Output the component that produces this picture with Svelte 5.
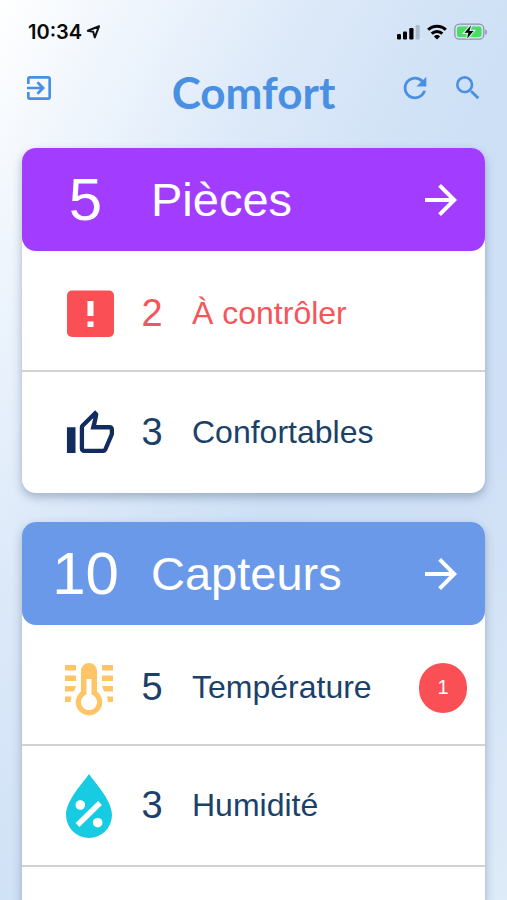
<script>
	const cards = [
		{
			title: 'Pièces',
			count: 5,
			theme: 'violet',
			rows: [
				{ icon: 'alert', count: 2, label: 'À contrôler', danger: true },
				{ icon: 'thumb', count: 3, label: 'Confortables' }
			]
		},
		{
			title: 'Capteurs',
			count: 10,
			theme: 'blue',
			rows: [
				{ icon: 'thermo', count: 5, label: 'Température', badge: 1 },
				{ icon: 'drop', count: 3, label: 'Humidité' },
				{}
			]
		}
	];
</script>

<div class="screen">
	<div class="status">
		<div class="status-left">
			<span class="time">10:34</span>
			<svg width="15" height="14" viewBox="0 0 15 14">
				<path d="M13 1.3 1.8 5.8l5.4 1 1.6 5.6z" fill="none" stroke="#111" stroke-width="2" stroke-linejoin="round" />
			</svg>
		</div>
		<div class="status-right">
			<svg width="23" height="16" viewBox="0 0 23 16">
				<rect x="0" y="10" width="4" height="5.5" rx="1.2" />
				<rect x="6" y="7.5" width="4" height="8" rx="1.2" />
				<rect x="12.3" y="4" width="4.2" height="11.5" rx="1.2" />
				<rect x="18.7" y="1" width="4" height="14.5" rx="1.2" fill="#a9bbd0" />
			</svg>
			<svg width="20" height="16" viewBox="0 0 20 16">
				<g fill="none" stroke="#000" stroke-width="3">
					<path d="M1.2 5.8a12.5 12.5 0 0 1 17.6 0" />
					<path d="M4.7 9.7a7.6 7.6 0 0 1 10.6 0" />
				</g>
				<path d="M10 15.5 6.9 12.4a4.4 4.4 0 0 1 6.2 0z" />
			</svg>
			<svg width="34" height="18" viewBox="0 0 34 18">
				<rect x="0.8" y="1.2" width="29" height="15" rx="4.5" fill="none" stroke="#8c96a4" stroke-width="1.3" />
				<rect x="3" y="3.4" width="24.6" height="10.6" rx="2.5" fill="#4cdb64" />
				<path d="M31.3 6.2c2.2.8 2.2 4.800 0 5.6z" fill="#8c96a4" />
				<path d="M17 2.500 10.500 9.800h3.900l-1.300 5.700L19.500 8h-4.200z" stroke="#d6e8f2" stroke-width="2.500" paint-order="stroke" />
			</svg>
		</div>
	</div>

	<header class="toolbar">
		<div class="tools">
			<button aria-label="Se déconnecter">
				<svg width="32" height="32" viewBox="0 0 24 24">
					<path d="M10.09 15.59 11.5 17l5-5-5-5-1.41 1.41L12.67 11H3v2h9.67zM19 3H5c-1.11 0-2 .9-2 2v4h2V5h14v14H5v-4H3v4c0 1.1.89 2 2 2h14c1.1 0 2-.9 2-2V5c0-1.1-.9-2-2-2z" />
				</svg>
			</button>
		</div>
		<h1>Comfort</h1>
		<div class="tools end">
			<button aria-label="Actualiser">
				<svg width="34" height="34" viewBox="0 0 24 24">
					<path d="M17.65 6.35A7.958 7.958 0 0 0 12 4c-4.42 0-7.99 3.58-7.99 8s3.57 8 7.99 8c3.73 0 6.84-2.55 7.73-6h-2.08A5.99 5.99 0 0 1 12 18c-3.31 0-6-2.69-6-6s2.69-6 6-6c1.66 0 3.14.69 4.22 1.78L13 11h7V4z" />
				</svg>
			</button>
			<button aria-label="Rechercher">
				<svg width="32" height="32" viewBox="0 0 24 24">
					<path d="M15.5 14h-.79l-.28-.27A6.471 6.471 0 0 0 16 9.5 6.5 6.5 0 1 0 9.5 16c1.61 0 3.09-.59 4.23-1.57l.27.28v.79l5 4.99L20.49 19zm-6 0C7.01 14 5 11.99 5 9.5S7.01 5 9.5 5 14 7.01 14 9.5 11.99 14 9.5 14z" />
				</svg>
			</button>
		</div>
	</header>

	<main>
		{#each cards as card}
			<section class="card">
				<button class="card-head {card.theme}">
					<span class="total">{card.count}</span>
					<span class="title">{card.title}</span>
					<svg width="48" height="48" viewBox="0 0 24 24">
						<path d="m12 4-1.41 1.41L16.17 11H4v2h12.17l-5.58 5.59L12 20l8-8z" />
					</svg>
				</button>
				{#each card.rows as row}
					<div class="row" class:danger={row.danger}>
						{#if row.icon}
							<svg width="56" height="64" viewBox="0 0 56 64">
								{#if row.icon === 'alert'}
									<rect x="5" y="8.5" width="47" height="46.5" rx="5" fill="#fa5055" />
									<path d="M25.5 19h6v15h-6zM25.5 39.5h6V45h-6z" fill="#fff" />
								{:else if row.icon === 'thumb'}
									<path
										transform="translate(2.8 7) scale(2.14)"
										fill="#122c5f"
										d="M9 21h9c.83 0 1.54-.5 1.84-1.22l3.02-7.05c.09-.23.14-.47.14-.73v-2c0-1.1-.9-2-2-2h-6.31l.95-4.57.03-.32c0-.41-.17-.79-.44-1.06L14.17 1 7.58 7.59C7.22 7.95 7 8.45 7 9v10c0 1.1.9 2 2 2zM9 9l4.34-4.34L12 10h9v2l-3 7H9V9zM1 9h4v12H1z"
									/>
								{:else if row.icon === 'thermo'}
									<g fill="#fec566">
										<path d="M3 9h11v5.5H3zM3 19.5h11V25H3zM3 30h11l-2 5.5H3zM3 40.5h6.5l-1 5.500H3z" />
										<path d="M40 9h11v5.5H40zM40 19.5h11V25H40zM40 30h11v5.5h-9zM45 40.5h6V46h-5z" />
										<path
											fill-rule="evenodd"
											d="M19 15a8 8 0 0 1 16 0v20.5a13.3 13.3 0 1 1-16 0zM24.5 23v15.5a8 8 0 1 0 5 0V23z"
										/>
									</g>
								{:else}
									<path d="M27 0C21 9 4 26 4 41a23 23 0 0 0 46 0C50 26 33 9 27 0z" fill="#17cbe3" />
									<g fill="#fff">
										<circle cx="18.3" cy="31" r="4.8" />
										<circle cx="35.7" cy="48.7" r="4.8" />
									</g>
									<path d="M15.500 51 38 29" stroke="#fff" stroke-width="5.4" />
								{/if}
							</svg>
							<span class="count">{row.count}</span>
							<span class="label">{row.label}</span>
							{#if row.badge}
								<span class="badge">{row.badge}</span>
							{/if}
						{/if}
					</div>
				{/each}
			</section>
		{/each}
	</main>
</div>

<style>
	:global(body) {
		margin: 0;
	}

	.screen {
		display: flex;
		flex-direction: column;
		height: 100vh;
		overflow: hidden;
		font-family: 'Liberation Sans', Arial, sans-serif;
		background: linear-gradient(118deg, #ffffff 0%, #edf4fc 16%, #dce9f9 32%, #cde0f5 54%, #cfe0f6 75%, #deebf8 100%);
	}

	button {
		padding: 0;
		border: 0;
		background: none;
		font: inherit;
		color: inherit;
		cursor: pointer;
	}

	svg {
		display: block;
		flex: none;
	}

	.status {
		display: flex;
		justify-content: space-between;
		align-items: center;
		height: 64px;
		padding: 0 19px 0 28px;
		box-sizing: border-box;
	}

	.status-left,
	.status-right {
		display: flex;
		align-items: center;
	}

	.status-left {
		gap: 4px;
	}

	.status-right {
		gap: 7px;
	}

	.time {
		font: 600 20px/24px Inter, sans-serif;
		color: #0a0a0a;
	}

	.toolbar {
		display: grid;
		grid-template-columns: 1fr auto 1fr;
		align-items: start;
		height: 84px;
		padding: 0 23px;
		box-sizing: border-box;
		flex: none;
		color: #4990e2;
	}

	.tools {
		display: flex;
		align-items: center;
		height: 48px;
	}

	.end {
		justify-content: flex-end;
		gap: 20px;
	}

	.tools svg,
	.card-head svg {
		fill: currentColor;
	}

	h1 {
		margin: 0;
		font: 700 44px/56px Lato, sans-serif;
	}

	main {
		flex: 1;
		min-height: 0;
		padding: 0 22px;
	}

	.card {
		margin-bottom: 29px;
		border-radius: 14px;
		background: #fff;
		box-shadow: 0 4px 10px rgba(70, 90, 120, 0.4);
	}

	.card-head {
		display: grid;
		grid-template-columns: 127px 1fr auto;
		align-items: center;
		width: 100%;
		height: 103px;
		padding-right: 20px;
		border-radius: 14px;
		color: #fff;
		text-align: left;
	}

	.violet {
		background: #a23dff;
	}

	.blue {
		background: #6b99ea;
	}

	.total {
		font-size: 60px;
		text-align: center;
	}

	.title {
		padding-left: 2px;
		font-size: 47px;
	}

	.row {
		display: flex;
		align-items: center;
		height: 121px;
		padding: 0 18px 0 40px;
		box-sizing: border-box;
		border-bottom: 2px solid #d2d2d2;
		color: #1b4168;
	}

	.card-head + .row {
		padding-top: 6px;
	}

	.row:last-child {
		border-bottom: 0;
	}

	.danger {
		color: #f4565a;
	}

	.count {
		width: 36px;
		margin: 0 22px 0 16px;
		font-size: 38px;
		text-align: center;
	}

	.label {
		flex: 1;
		font-size: 32px;
	}

	.badge {
		display: flex;
		align-items: center;
		justify-content: center;
		width: 48px;
		height: 50px;
		border-radius: 24px;
		background: #fa5055;
		color: #fff;
		font-size: 20px;
	}
</style>
